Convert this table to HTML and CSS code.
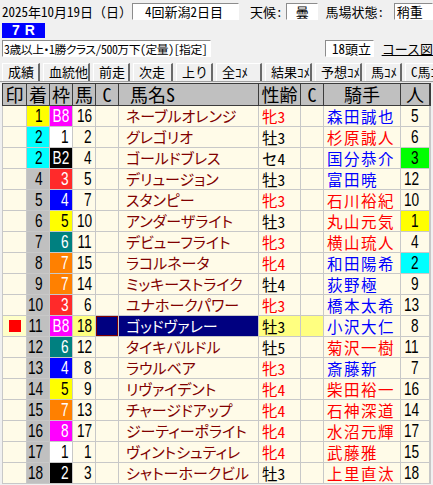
FILE: index.html
```html
<!DOCTYPE html>
<html lang="ja">
<head>
<meta charset="utf-8">
<title>7R</title>
<link rel="stylesheet" href="styles.css">
</head>
<body>
<div class="r1">
  <div class="date">2025年10月19日<span class="fw">（日）</span></div>
  <div class="box meet">4回新潟2日目</div>
  <div class="lbl wlbl">天候：</div>
  <div class="box wx">曇</div>
  <div class="lbl glbl">馬場状態：</div>
  <div class="box go">稍重</div>
</div>
<div class="race">7 R</div>
<div class="r3">
  <div class="box cond">3歳以上・1勝クラス/500万下(定量)[指定]</div>
  <div class="box heads">18頭立</div>
  <a class="course">コース図</a>
</div>
<div class="tabs">
  <div class="tab">成績</div>
  <div class="tab">血統他</div>
  <div class="tab">前走</div>
  <div class="tab">次走</div>
  <div class="tab">上り</div>
  <div class="tab">全ｺﾒ</div>
  <div class="tab">結果ｺﾒ</div>
  <div class="tab">予想ｺﾒ</div>
  <div class="tab">馬ｺﾒ</div>
  <div class="tab">C馬ｺﾒ</div>
</div>
<div class="sep"></div>
<div class="grid thead">
  <div>印</div><div>着</div><div>枠</div><div>馬</div><div>Ｃ</div>
  <div class="hname">馬名S</div><div>性齢</div><div>Ｃ</div><div>騎手</div><div>人</div>
</div>
<div class="grid tbody">
  <div></div><div class="rk r1st"><span class="n">1</span></div><div class="fr f8"><span class="n">B8</span></div><div class="um"><span class="n">16</span></div><div></div><div class="nm">ネーブルオレンジ</div><div class="sa fem">牝3</div><div></div><div class="jk b">森田誠也</div><div class="pp"><span class="n">5</span></div>
  <div></div><div class="rk r2nd"><span class="n">2</span></div><div class="fr f1"><span class="n">1</span></div><div class="um"><span class="n">2</span></div><div></div><div class="nm">グレゴリオ</div><div class="sa">牡3</div><div></div><div class="jk r">杉原誠人</div><div class="pp"><span class="n">6</span></div>
  <div></div><div class="rk r2nd"><span class="n">2</span></div><div class="fr f2"><span class="n">B2</span></div><div class="um"><span class="n">4</span></div><div></div><div class="nm">ゴールドブレス</div><div class="sa">セ4</div><div></div><div class="jk b">国分恭介</div><div class="pp p3"><span class="n">3</span></div>
  <div></div><div class="rk"><span class="n">4</span></div><div class="fr f3"><span class="n">3</span></div><div class="um"><span class="n">5</span></div><div></div><div class="nm">デリュージョン</div><div class="sa">牡3</div><div></div><div class="jk b">富田暁</div><div class="pp"><span class="n">12</span></div>
  <div></div><div class="rk"><span class="n">5</span></div><div class="fr f4"><span class="n">4</span></div><div class="um"><span class="n">7</span></div><div></div><div class="nm">スタンピー</div><div class="sa fem">牝3</div><div></div><div class="jk r">石川裕紀</div><div class="pp"><span class="n">10</span></div>
  <div></div><div class="rk"><span class="n">6</span></div><div class="fr f5"><span class="n">5</span></div><div class="um"><span class="n">10</span></div><div></div><div class="nm">アンダーザライト</div><div class="sa">牡3</div><div></div><div class="jk r">丸山元気</div><div class="pp p1"><span class="n">1</span></div>
  <div></div><div class="rk"><span class="n">7</span></div><div class="fr f6"><span class="n">6</span></div><div class="um"><span class="n">11</span></div><div></div><div class="nm">デビューフライト</div><div class="sa fem">牝3</div><div></div><div class="jk r">横山琉人</div><div class="pp"><span class="n">4</span></div>
  <div></div><div class="rk"><span class="n">8</span></div><div class="fr f7"><span class="n">7</span></div><div class="um"><span class="n">15</span></div><div></div><div class="nm">ラコルネータ</div><div class="sa fem">牝4</div><div></div><div class="jk b">和田陽希</div><div class="pp p2"><span class="n">2</span></div>
  <div></div><div class="rk"><span class="n">9</span></div><div class="fr f7"><span class="n">7</span></div><div class="um"><span class="n">14</span></div><div></div><div class="nm">ミッキーストライク</div><div class="sa">牡4</div><div></div><div class="jk b">荻野極</div><div class="pp"><span class="n">9</span></div>
  <div></div><div class="rk"><span class="n">10</span></div><div class="fr f3"><span class="n">3</span></div><div class="um"><span class="n">6</span></div><div></div><div class="nm">ユナホークパワー</div><div class="sa fem">牝3</div><div></div><div class="jk b">橋本太希</div><div class="pp"><span class="n">13</span></div>
  <div class="mk"><span class="sq"></span></div><div class="rk"><span class="n">11</span></div><div class="fr f8"><span class="n">B8</span></div><div class="um hl"><span class="n">18</span></div><div class="navc"></div><div class="nm nav">ゴッドヴァレー</div><div class="sa hl">牡3</div><div class="hl"></div><div class="jk b">小沢大仁</div><div class="pp"><span class="n">8</span></div>
  <div></div><div class="rk"><span class="n">12</span></div><div class="fr f6"><span class="n">6</span></div><div class="um"><span class="n">12</span></div><div></div><div class="nm">タイキバルドル</div><div class="sa">牡5</div><div></div><div class="jk r">菊沢一樹</div><div class="pp"><span class="n">11</span></div>
  <div></div><div class="rk"><span class="n">13</span></div><div class="fr f4"><span class="n">4</span></div><div class="um"><span class="n">8</span></div><div></div><div class="nm">ラウルベア</div><div class="sa fem">牝3</div><div></div><div class="jk b">斎藤新</div><div class="pp"><span class="n">7</span></div>
  <div></div><div class="rk"><span class="n">14</span></div><div class="fr f5"><span class="n">5</span></div><div class="um"><span class="n">9</span></div><div></div><div class="nm">リヴァイデント</div><div class="sa fem">牝4</div><div></div><div class="jk r">柴田裕一</div><div class="pp"><span class="n">16</span></div>
  <div></div><div class="rk"><span class="n">15</span></div><div class="fr f7"><span class="n">7</span></div><div class="um"><span class="n">13</span></div><div></div><div class="nm">チャージドアップ</div><div class="sa fem">牝4</div><div></div><div class="jk r">石神深道</div><div class="pp"><span class="n">14</span></div>
  <div></div><div class="rk"><span class="n">16</span></div><div class="fr f8"><span class="n">8</span></div><div class="um"><span class="n">17</span></div><div></div><div class="nm">ジーティーポライト</div><div class="sa fem">牝4</div><div></div><div class="jk r">水沼元輝</div><div class="pp"><span class="n">17</span></div>
  <div></div><div class="rk"><span class="n">17</span></div><div class="fr f1"><span class="n">1</span></div><div class="um"><span class="n">1</span></div><div></div><div class="nm">ヴィントシュティレ</div><div class="sa fem">牝4</div><div></div><div class="jk r">武藤雅</div><div class="pp"><span class="n">15</span></div>
  <div></div><div class="rk"><span class="n">18</span></div><div class="fr f2"><span class="n">2</span></div><div class="um"><span class="n">3</span></div><div></div><div class="nm">シャトーホークビル</div><div class="sa">牡3</div><div></div><div class="jk r">上里直汰</div><div class="pp"><span class="n">18</span></div>
</div>
</body>
</html>
```

FILE: styles.css
```css
* { box-sizing: border-box; }
html, body { margin: 0; padding: 0; }
body {
  width: 433px;
  height: 485px;
  overflow: hidden;
  background: #f0f0f0;
  color: #000;
  font-family: "Noto Sans CJK JP", sans-serif;
  font-feature-settings: "hwid";
  font-size: 13px;
}

.r1 {
  height: 22px;
  display: flex;
  align-items: center;
  padding-left: 2px;
  white-space: nowrap;
}
.date { width: 132px; font-size: 13px; line-height: 17px; }
.fw { font-feature-settings: normal; }
.box {
  background: #fff;
  border-top: 1px solid #8c8c8c;
  border-left: 1px solid #8c8c8c;
  border-right: 1px solid #fff;
  border-bottom: 1px solid #fff;
  height: 17px;
  line-height: 15px;
  font-size: 13px;
  white-space: nowrap;
  overflow: hidden;
}
.meet { width: 109px; padding-left: 12px; }
.lbl { font-size: 13px; line-height: 17px; }
.wlbl { margin-left: 11px; width: 37px; }
.wx { width: 33px; text-align: center; }
.glbl { margin-left: 7px; width: 70px; }
.go { width: 40px; padding-left: 2px; }

.race {
  margin: 1px 0 0 2px;
  width: 43px;
  height: 15px;
  background: #0000ff;
  color: #fff;
  font-family: "Liberation Sans", sans-serif;
  font-weight: bold;
  font-size: 14px;
  line-height: 15px;
  padding-left: 10px;
  word-spacing: 1px;
}

.r3 {
  margin-top: 2px;
  height: 17px;
  display: flex;
  align-items: center;
  padding-left: 2px;
  white-space: nowrap;
}
.cond {
  width: 216px;
  padding-left: 1px;
  font-size: 11.8px;
  letter-spacing: -0.45px;
  font-feature-settings: "hwid", "palt";
}
.heads { margin-left: 114px; width: 50px; padding-left: 6px; }
.course {
  margin-left: 8px;
  font-size: 13px;
  line-height: 15px;
  text-decoration: underline;
  color: #000;
}

.tabs {
  margin-top: 6px;
  height: 18px;
  padding-left: 2px;
  display: grid;
  grid-template-columns: 38px 47px 37px 40px 37px 46px 47px 47px 37px 40px;
  column-gap: 3px;
  white-space: nowrap;
  overflow: hidden;
}
.tab {
  border-left: 1px solid #fff;
  border-top: 1px solid #fff;
  border-right: 2px solid #6a6a6a;
  padding-left: 5px;
  font-size: 13px;
  line-height: 16px;
  overflow: hidden;
}
.sep {
  height: 2px;
  border-top: 1px solid #a0a0a0;
  border-bottom: 1px solid #e8e8e8;
}

.grid {
  display: grid;
  grid-template-columns: 23px 22px 22px 22px 22px 139px 41px 22px 76px 28px;
  column-gap: 1px;
  width: 429px;
  margin-left: 2px;
}
.thead {
  background: #3c3c3c;
  padding: 1px;
  grid-auto-rows: 21px;
}
.thead > div {
  background: #c0c0c0;
  display: flex;
  align-items: center;
  justify-content: center;
  font-size: 18px;
  line-height: 21px;
}
.thead > .hname { justify-content: flex-start; padding-left: 11px; }

.tbody {
  background: #c8c8c8;
  padding: 0 1px 1px;
  row-gap: 1px;
  grid-auto-rows: 20px;
}
.tbody > div {
  background: #fffbe8;
  display: flex;
  align-items: center;
  font-size: 16px;
  line-height: 20px;
  white-space: nowrap;
}
.n {
  display: inline-block;
  font-family: "Liberation Sans", sans-serif;
  font-size: 19px;
  line-height: 20px;
  transform: scaleX(0.72);
  transform-origin: 100% 50%;
}
.tbody > .rk { background: #c0c0c0; justify-content: flex-end; padding-right: 6px; }
.tbody > .r1st { background: #ffff00; }
.tbody > .r2nd { background: #00ffff; }
.tbody > .fr { justify-content: flex-end; padding-right: 3px; color: #fff; }
.tbody > .f1 { background: #fff; color: #000; }
.tbody > .f2 { background: #000; }
.tbody > .f3 { background: #ff2a2a; }
.tbody > .f4 { background: #0000ff; }
.tbody > .f5 { background: #ffff00; color: #000; }
.tbody > .f6 { background: #008080; }
.tbody > .f7 { background: #ff8000; }
.tbody > .f8 { background: #ff00ff; }
.tbody > .um { justify-content: flex-end; padding-right: 3px; }
.tbody > .nm {
  color: #800000;
  padding-left: 7px;
  font-size: 15px;
  font-feature-settings: "palt";
  overflow: hidden;
}
.tbody > .sa { padding-left: 3px; font-size: 15.5px; }
.tbody > .fem { color: #ff0000; }
.tbody > .jk { padding-left: 3px; font-size: 15.5px; letter-spacing: 1.5px; overflow: hidden; }
.tbody > .b { color: #0000ff; }
.tbody > .r { color: #ff0000; }
.tbody > .pp { justify-content: flex-end; padding-right: 10px; }
.tbody > .p1 { background: #ffff00; }
.tbody > .p2 { background: #00ffff; }
.tbody > .p3 { background: #00ff00; }

.tbody > .mk { background: #ffffc8; padding-left: 6px; }
.sq { display: block; width: 12px; height: 12px; background: #ff0000; }
.tbody > .hl { background: #ffff80; }
.tbody > .navc { background: #000080; box-shadow: inset 0 0 0 1px #800000; }
.tbody > .nav { background: #000080; color: #fff; }
```
